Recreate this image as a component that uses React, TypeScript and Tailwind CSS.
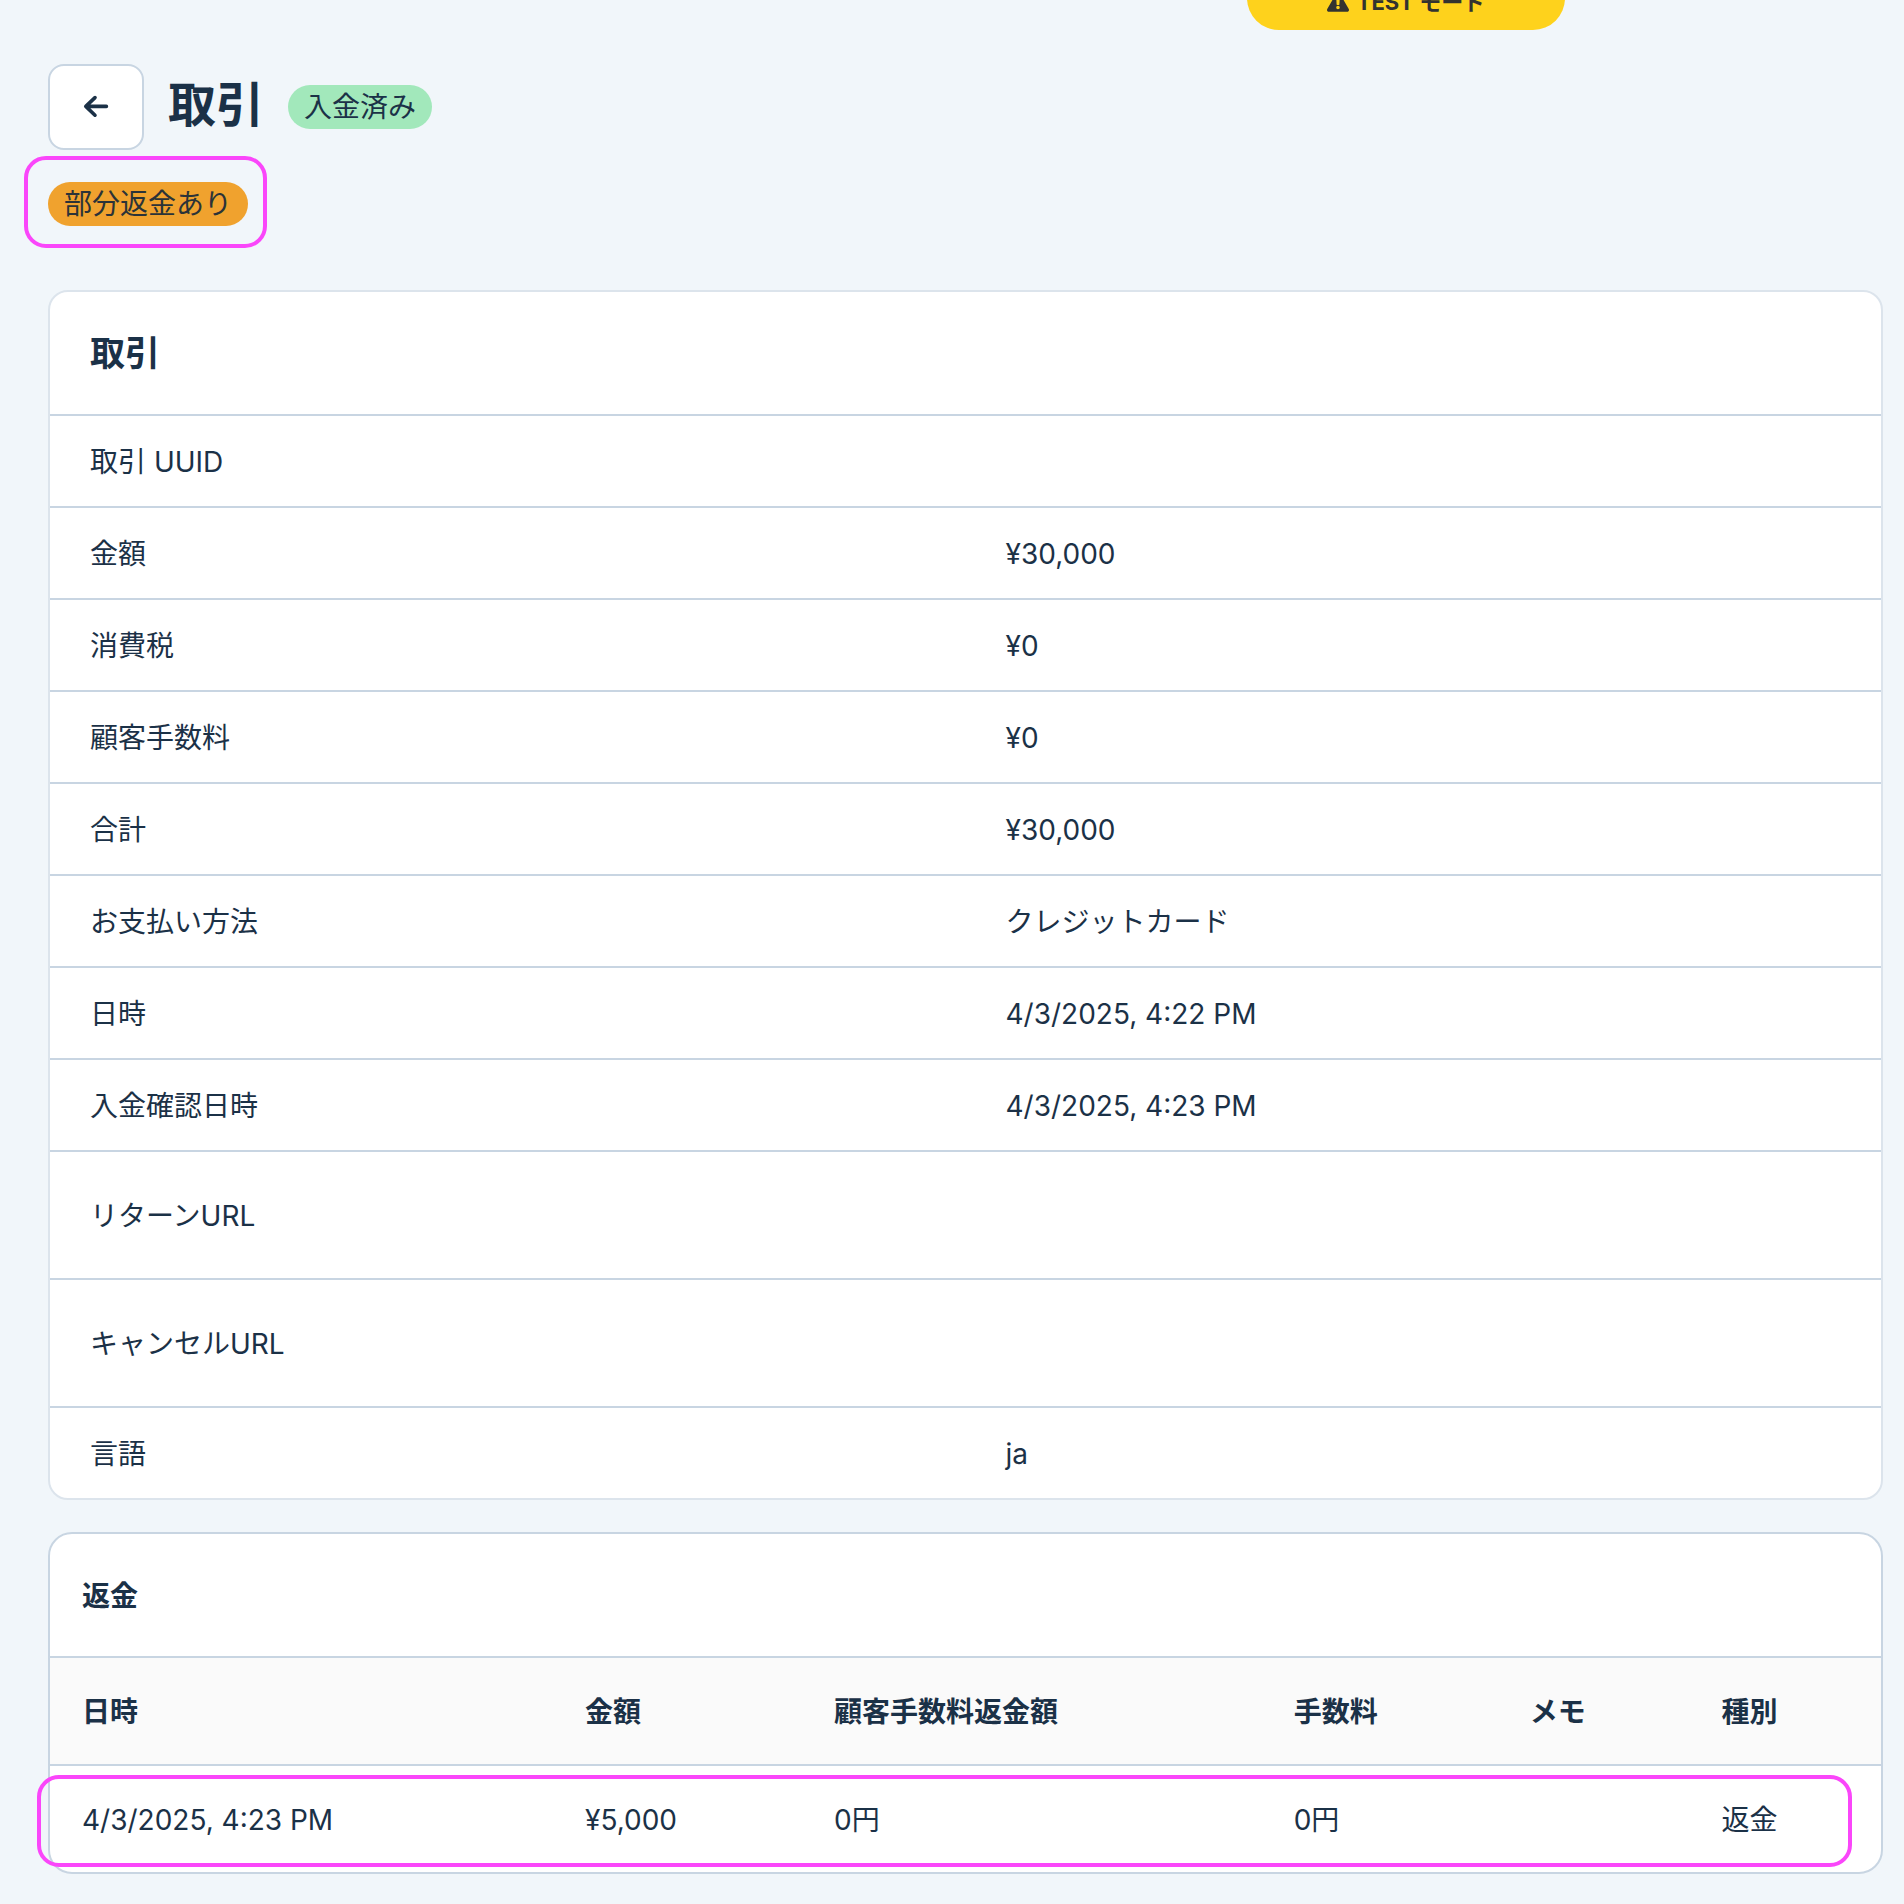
import React from "react";
import { FaExclamationTriangle } from "react-icons/fa";

const details: { label: string; value: string; tall?: boolean }[] = [
  { label: "取引 UUID", value: "" },
  { label: "金額", value: "¥30,000" },
  { label: "消費税", value: "¥0" },
  { label: "顧客手数料", value: "¥0" },
  { label: "合計", value: "¥30,000" },
  { label: "お支払い方法", value: "クレジットカード" },
  { label: "日時", value: "4/3/2025, 4:22 PM" },
  { label: "入金確認日時", value: "4/3/2025, 4:23 PM" },
  { label: "リターンURL", value: "", tall: true },
  { label: "キャンセルURL", value: "", tall: true },
  { label: "言語", value: "ja" },
];

const refundHeads = ["日時", "金額", "顧客手数料返金額", "手数料", "メモ", "種別"];
const refunds = [["4/3/2025, 4:23 PM", "¥5,000", "0円", "0円", "", "返金"]];

function Highlight({ className }: { className: string }) {
  return (
    <div
      aria-hidden="true"
      className={`pointer-events-none absolute rounded-[22px] border-4 border-[#fa46fa] ${className}`}
    />
  );
}

function Badge({ className, children }: { className: string; children: React.ReactNode }) {
  return (
    <span className={`inline-flex h-11 items-center rounded-full px-4 whitespace-nowrap ${className}`}>
      {children}
    </span>
  );
}

function DetailCard() {
  return (
    <section className="overflow-hidden rounded-[20px] border-2 border-[#dce4ec] bg-white">
      <h2 className="flex h-[124px] items-center border-b-2 border-[#c8d5e2] px-10 text-[35px] leading-none font-bold">
        取引
      </h2>
      <table className="w-full table-fixed border-separate border-spacing-0 text-left">
        <tbody className="[&>tr:last-child>*]:h-[90px] [&>tr:last-child>*]:border-b-0">
          {details.map(({ label, value, tall }) => (
            <tr key={label}>
              <th
                scope="row"
                className={`border-b-2 border-[#c8d5e2] px-10 pt-0.5 font-normal ${tall ? "h-32" : "h-[92px]"}`}
              >
                {label}
              </th>
              <td className="border-b-2 border-[#c8d5e2] px-10 pt-0.5">{value}</td>
            </tr>
          ))}
        </tbody>
      </table>
    </section>
  );
}

function RefundCard() {
  return (
    <div className="relative">
      <section className="overflow-hidden rounded-[24px] border-2 border-[#c8d5e2] bg-white">
        <h2 className="flex h-[122px] items-center px-8 pt-0.5 font-bold">返金</h2>
        <table className="w-full border-separate border-spacing-0 text-left whitespace-nowrap">
          <thead className="bg-[#fafafa]">
            <tr>
              {refundHeads.map((head) => (
                <th key={head} scope="col" className="h-[110px] border-y-2 border-[#c8d5e2] px-8 pt-0.5 font-bold">
                  {head}
                </th>
              ))}
            </tr>
          </thead>
          <tbody>
            {refunds.map((row, i) => (
              <tr key={i}>
                {row.map((cell, j) => (
                  <td key={j} className="h-[106px] px-8 pt-0.5">
                    {cell}
                  </td>
                ))}
              </tr>
            ))}
          </tbody>
        </table>
      </section>
      <Highlight className="right-[31px] bottom-[7px] -left-[11px] h-[92px]" />
    </div>
  );
}

export default function App() {
  return (
    <div className="relative min-h-screen overflow-hidden bg-[#f1f6fa] pt-16 pr-[21px] pb-[30px] pl-12 font-['Inter','Noto_Sans_CJK_JP',sans-serif] text-[28px] leading-10 text-[#1b3147]">
      <div className="absolute -top-[34px] right-[339px] flex h-16 w-[318px] items-center justify-center gap-2 rounded-full bg-[#fed21c] pt-2 text-[22px] leading-none font-bold text-[#333330]">
        <FaExclamationTriangle aria-hidden="true" />
        <span>TEST モード</span>
      </div>

      <header className="mb-16">
        <div className="mb-8 flex items-center gap-6">
          <button
            type="button"
            aria-label="戻る"
            className="flex h-[86px] w-24 items-center justify-center rounded-2xl border-2 border-[#c8d5e2] bg-white"
          >
            <svg
              viewBox="0 0 26 26"
              className="size-[26px]"
              fill="none"
              stroke="currentColor"
              strokeWidth="3.6"
              strokeLinecap="round"
              strokeLinejoin="round"
              aria-hidden="true"
            >
              <path d="M23.4 12.4H3M12 3.6L2.8 12.4L12 21.2" />
            </svg>
          </button>
          <h1 className="pb-1 text-5xl leading-none font-bold">取引</h1>
          <Badge className="bg-[#a2e8bb]">入金済み</Badge>
        </div>
        <div className="relative flex w-fit">
          <Badge className="bg-[#f0a22e] text-[#2b3338]">部分返金あり</Badge>
          <Highlight className="-top-[26px] -right-[19px] -bottom-[22px] -left-6" />
        </div>
      </header>

      <main className="flex flex-col gap-8">
        <DetailCard />
        <RefundCard />
      </main>
    </div>
  );
}
